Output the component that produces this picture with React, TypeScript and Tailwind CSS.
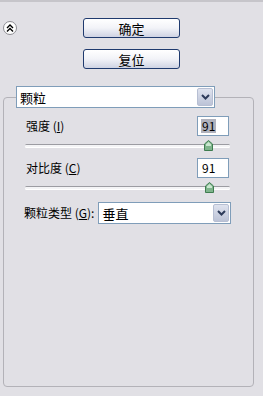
import React from "react";

const FONT = { fontFamily: '"Noto Sans CJK SC", "Liberation Sans", sans-serif' };

function Chevron() {
  return (
    <svg width="9" height="6" viewBox="0 0 9 6">
      <path d="M1 1 L4.5 4.5 L8 1" fill="none" stroke="#2d3b5a" strokeWidth="2" />
    </svg>
  );
}

function Select({ value, className }: { value: string; className: string }) {
  return (
    <div className={`flex items-center border border-[#7f9db9] bg-white ${className}`}>
      <span className="flex-1 pl-[3px] text-[13px] leading-none">{value}</span>
      <div className="mr-[1px] flex h-[18px] w-[16px] items-center justify-center rounded-[2px] border border-[#b7bfd3] bg-gradient-to-b from-[#dfe3ef] to-[#bcc3d7]">
        <Chevron />
      </div>
    </div>
  );
}

function Slider({ thumb }: { thumb: string }) {
  return (
    <div className="relative ml-[21px] h-[10px] w-[205px]">
      <div className="absolute left-0 right-0 top-[4px] h-[3px] rounded-full border-t border-[#9c9ca2] bg-[#f4f4f6] shadow-[0_1px_0_#ffffff]" />
      <svg className={`absolute top-0 ${thumb}`} width="9" height="11" viewBox="0 0 9 11">
        <path d="M4.5 0.5 L8.5 4 L8.5 10.5 L0.5 10.5 L0.5 4 Z" fill="#7fb48c" stroke="#3f7d50" />
        <path d="M4.5 2 L7 4.3 L7 6 L2 6 L2 4.3 Z" fill="#c9e6cf" />
      </svg>
    </div>
  );
}

function NumRow({ label, hot, selected }: { label: string; hot: string; selected?: boolean }) {
  return (
    <div className="flex items-center justify-between pl-[22px] pr-[24px]">
      <span className="text-[12px]">
        {label} (<u>{hot}</u>)
      </span>
      <div className="flex h-[20px] w-[32px] items-center border border-[#7f9db9] bg-white pl-[3px]">
        <span className={`px-[1px] text-[12px] leading-[14px] ${selected ? "bg-[#b0b2bd]" : ""}`}>91</span>
      </div>
    </div>
  );
}

export default function App() {
  return (
    <div
      className="relative h-[396px] w-[263px] overflow-hidden border-t-2 border-[#c6c5ca] bg-[#e1e0e5] text-black"
      style={FONT}
    >
      <div className="absolute left-[3px] top-[19px] flex h-[14px] w-[14px] items-center justify-center rounded-full border border-[#8d8d93] bg-white">
        <svg width="8" height="8" viewBox="0 0 8 8">
          <path d="M1 4 L4 1 L7 4 M1 7.5 L4 4.5 L7 7.5" fill="none" stroke="#000" strokeWidth="1.4" />
        </svg>
      </div>

      <div className="flex flex-col items-center gap-[11px] pt-[16px]">
        <button className="h-[20px] w-[97px] rounded-[3px] border border-[#1f3a6e] bg-gradient-to-b from-white via-[#f2f3f8] to-[#cfd3e3] text-[13px] leading-none">
          确定
        </button>
        <button className="h-[20px] w-[97px] rounded-[3px] border border-[#1f3a6e] bg-gradient-to-b from-white via-[#f2f3f8] to-[#cfd3e3] text-[13px] leading-none">
          复位
        </button>
      </div>

      <div className="ml-[3px] mt-[28px] h-[290px] w-[251px] rounded-[4px] border border-[#b3b2b8]">
        <Select value="颗粒" className="-mt-[12px] ml-[12px] h-[22px] w-[199px]" />

        <div className="mt-[8px]">
          <NumRow label="强度" hot="I" selected />
        </div>
        <div className="mt-[4px]">
          <Slider thumb="left-[179px]" />
        </div>

        <div className="mt-[8px]">
          <NumRow label="对比度" hot="C" />
        </div>
        <div className="mt-[4px]">
          <Slider thumb="left-[180px]" />
        </div>

        <div className="mt-[10px] flex items-center pl-[20px]">
          <span className="mr-[4px] text-[12px]">
            颗粒类型 (<u>G</u>):
          </span>
          <Select value="垂直" className="h-[22px] w-[133px]" />
        </div>
      </div>
    </div>
  );
}
